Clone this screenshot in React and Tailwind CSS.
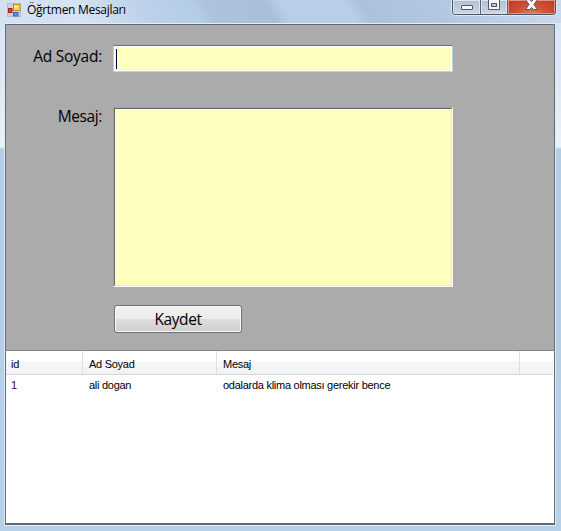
function AppIcon() {
  return (
    <svg width="16" height="16" viewBox="0 0 16 16" className="block shrink-0">
      <rect x="0.5" y="0.5" width="13" height="13" fill="#cdd0d6" stroke="#b9bcc4" />
      <rect x="1.5" y="5.5" width="3.500" height="4" fill="#d5443a" stroke="#9f2420" />
      <rect x="6.5" y="1.5" width="6.5" height="6" fill="#fbd65b" stroke="#c98d1c" />
      <rect x="7.5" y="2.5" width="3" height="2" fill="#fff0ae" />
      <rect x="6.5" y="9.5" width="4.500" height="3.5" fill="#5b93ec" stroke="#3566c9" />
    </svg>
  );
}

function CaptionButtons() {
  return (
    <div className="flex h-[15px] w-[104px] overflow-hidden rounded-b-[4px] border border-t-0 border-[#4c5566] shadow-[0_0_0_1px_#dfeaf6]">
      <div className="flex w-[28px] justify-center border-r border-[#596479] bg-linear-to-b from-[#b3bfcf] to-[#c9d7e8] shadow-[inset_0_0_0_1px_#dce5ef]">
        <svg width="12" height="11" className="block shrink-0">
          <rect x="0.5" y="5.5" width="11" height="4" rx="0.5" fill="#f8f8f8" stroke="#535666" />
        </svg>
      </div>
      <div className="flex w-[27px] justify-center border-r border-[#596479] bg-linear-to-b from-[#b3bfcf] to-[#c9d7e8] shadow-[inset_0_0_0_1px_#dce5ef]">
        <svg width="12" height="11" className="block shrink-0">
          <path d="M.5 -1V9.500H11.500V-1Z" fill="#f8f8f8" stroke="#535666" />
          <rect x="3.500" y="3.500" width="5" height="3" fill="#b9c7d8" stroke="#535666" />
        </svg>
      </div>
      <div className="flex flex-1 justify-center bg-[radial-gradient(ellipse_at_50%_120%,#e58a62_0%,#cf5038_50%,#bd3524_100%)] shadow-[inset_0_0_0_1px_#df9485]">
        <svg width="13" height="11" className="block shrink-0">
          <path d="M.5 -.500H4.500L6.500 1.500L8.500 -.500H12.500L9 4.500L12.500 9.500H8.500L6.500 7.500L4.500 9.500H.5L4 4.500Z" fill="#f7f7f7" stroke="#535666" />
        </svg>
      </div>
    </div>
  );
}

function HeaderCell({ children, className }) {
  return (
    <div className={`shrink-0 border-r border-[#dfe0e2] pt-[6px] ${className}`}>{children}</div>
  );
}

export default function App() {
  return (
    <div className="flex h-[531px] w-[561px] flex-col overflow-hidden bg-[linear-gradient(180deg,#d5e3f2_0px,#dce8f5_70px,#eaf1f9_147px,#b4cde6_149px,#b9d0e9_100%)] font-['Open_Sans','Noto_Sans',sans-serif] text-black">
      <header className="flex h-[23px] shrink-0 items-start bg-[linear-gradient(58deg,#d3e1f1_0%,#d4e2f1_16%,#bdd1e9_26%,#b4cde6_35%,#adc3dd_38%,#a9bfd9_48%,#b9cfe8_51%,#b9cfe8_62%,#abc1dc_65%,#b4c7e1_78%,#cbd9ec_100%)] pl-[7px]">
        <div className="pt-[3px]"><AppIcon /></div>
        <h1 className="ml-[4px] flex-1 pt-[2px] text-[12px] leading-[16px] tracking-[-0.3px] whitespace-nowrap">Öğrtmen Mesajları</h1>
        <div className="mr-[5px]"><CaptionButtons /></div>
      </header>

      <main className="mx-[4px] flex h-[503px] w-[552px] shrink-0 flex-col border border-[#e2edf8]">
        <div className="flex flex-1 flex-col border border-b-2 border-[#5f6b78] bg-white">
          <form className="flex h-[325px] shrink-0 flex-col bg-[#ababab] pt-[20px]" onSubmit={(e) => e.preventDefault()}>
            <div className="flex">
              <label className="w-[96px] shrink-0 text-right text-[15.500px] font-medium leading-[22px] tracking-[-0.25px] whitespace-nowrap">Ad Soyad:</label>
              <div className="ml-[11px] h-[27px] w-[340px] rounded-[1px] border border-[#b7d5ee] border-t-[#3d7bad]">
                <div className="h-full border border-white bg-[#ffffc0] pt-[2px] pl-px">
                  <div className="h-[20px] w-px bg-[#00003f]" />
                </div>
              </div>
            </div>
            <div className="mt-[35px] flex">
              <label className="w-[96px] shrink-0 text-right text-[15.500px] font-medium leading-[18px] tracking-[-0.4px]">Mesaj:</label>
              <div className="ml-[11px] h-[180px] w-[340px] border border-[#a0a0a0] border-r-white border-b-white">
                <div className="h-full border border-[#696969] border-r-[#e3e3e3] border-b-[#e3e3e3] bg-[#ffffc0]" />
              </div>
            </div>
            <button className="mt-[18px] ml-[108px] h-[28px] w-[128px] rounded-[3px] border border-[#707070] bg-[linear-gradient(180deg,#f2f2f2_0%,#ebebeb_49%,#dddddd_50%,#cfcfcf_100%)] text-[15.500px] font-medium leading-[26px] tracking-[-0.4px] shadow-[inset_0_0_0_1px_#fbfbfb]">Kaydet</button>
          </form>

          <section className="flex-1 border-t border-[#828790] bg-white font-['Liberation_Sans',Arial,sans-serif] text-[11px] leading-[14px] tracking-[-0.27px] whitespace-nowrap">
            <div className="mr-px flex h-[24px] border-b border-[#d5d5d5] bg-[linear-gradient(180deg,#ffffff_0px,#ffffff_10px,#f7f8fa_10px,#f1f2f4_23px)]">
              <HeaderCell className="w-[77px] pl-[5px]">id</HeaderCell>
              <HeaderCell className="w-[134px] pl-[6px]">Ad Soyad</HeaderCell>
              <HeaderCell className="w-[303px] pl-[6px]">Mesaj</HeaderCell>
            </div>
            <div className="flex pt-[3px]">
              <div className="w-[77px] pl-[5px] text-[#400040]">1</div>
              <div className="w-[134px] pl-[6px]">ali dogan</div>
              <div className="pl-[6px]">odalarda klima olması gerekir bence</div>
            </div>
          </section>
        </div>
      </main>
    </div>
  );
}
